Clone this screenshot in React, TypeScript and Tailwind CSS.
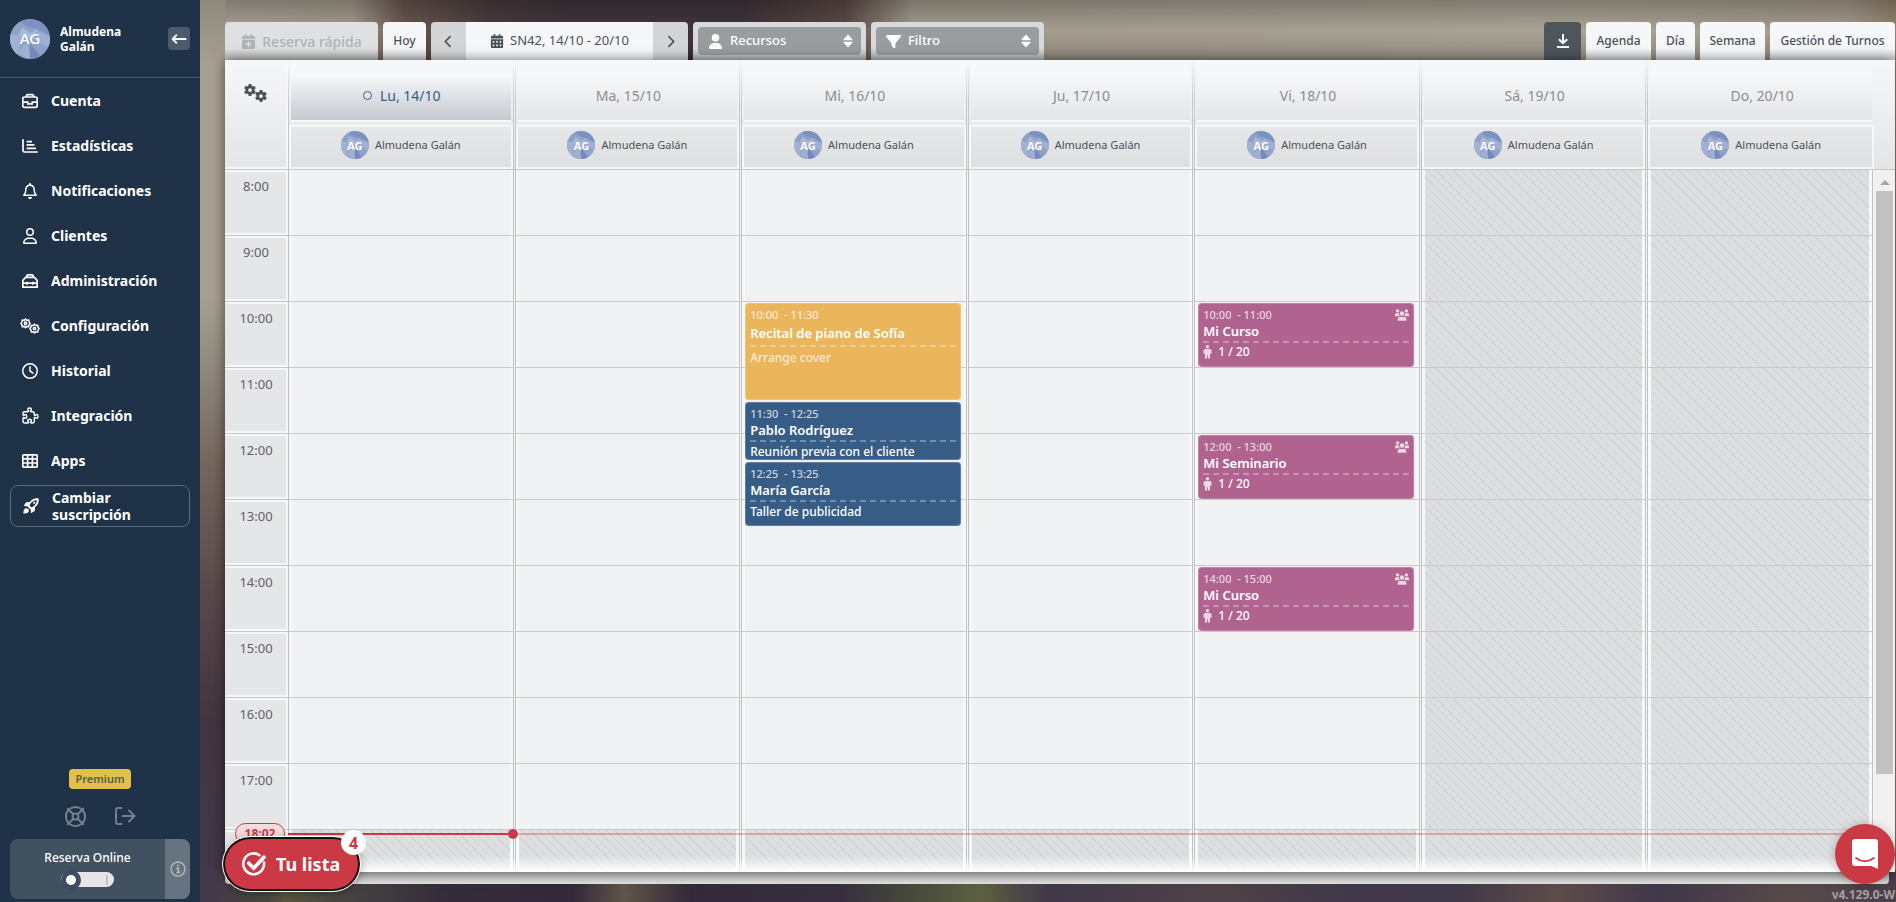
import React from "react";
import {
  FaRegBell, FaRegUser, FaRegClock, FaGear, FaPuzzlePiece, FaRegLifeRing, FaCalendarPlus,
  FaCalendarDays, FaUser, FaFilter, FaChevronLeft, FaChevronRight,
} from "react-icons/fa6";

type Line = React.SVGProps<SVGSVGElement>;
const Svg = (p: Line) => (
  <svg viewBox="0 0 16 16" width="16" height="16" fill="none" stroke="currentColor" strokeWidth="1.5" aria-hidden="true" {...p} />
);

const Briefcase = () => (
  <Svg strokeWidth="1.7">
    <rect x="0.8" y="4" width="14.4" height="10.4" rx="1.6" />
    <path d="M4.5 4V2.6Q4.5 1.6 5.5 1.6h5q1 0 1 1V4M1 9.2h4.8v1.6h4.4V9.2H15" />
  </Svg>
);
const ChartBars = () => (
  <Svg strokeWidth="1.7">
    <path d="M1 1.2V12.4Q1 14 2.6 14H15.8M4.6 3.6H10M4.6 6.9H12.4M4.6 10.3H14" />
  </Svg>
);
const Toolbox = () => (
  <Svg strokeWidth="1.7">
    <path d="M.8 14.2V7.4L3.6 4.4h8.8l2.8 3v6.8zM4.9 4.4V2.8q0-1 1-1h4.2q1 0 1 1v1.6M1 10.2h14M5 8.8v3M11 8.8v3" />
  </Svg>
);
const GridCells = () => (
  <Svg strokeWidth="1.7">
    <rect x="0.8" y="1.8" width="14.4" height="12.4" rx="1" />
    <path d="M.8 5.8h14.4M.8 10h14.4M5.6 2v12M10.4 2v12" />
  </Svg>
);
const Rocket = () => (
  <Svg viewBox="0 0 16 16" fill="currentColor" stroke="none">
    <path
      fillRule="evenodd"
      d="M15.6.4C11.600-.2 8.700 1.400 6.800 4L3.600 4.200Q3 4.300 2.700 4.800L.8 8l3.400.2 3.600 3.600.2 3.400 3.200-1.900q.5-.3.600-.9l.2-3.200C14.600 7.300 16.200 4.400 15.600.4zM13.800 2.200C13.800 4.900 12.500 7 10.200 8.600L8.700 9.600 6.400 7.300 7.400 5.800C9 3.500 11.100 2.200 13.800 2.200z"
    />
    <circle cx="11.2" cy="4.8" r="1.1" />
    <path d="M1.700 10.700q2-1.200 3.400.2t.2 3.400Q4.300 15.700.4 15.600.3 11.700 1.700 10.700z" />
  </Svg>
);
const LongArrowLeft = () => (
  <Svg strokeWidth="1.8" strokeLinecap="round" strokeLinejoin="round">
    <path d="M14.600 8H1.800M5.400 4.200 1.600 8l3.800 3.800" />
  </Svg>
);
const Puzzle = () => <FaPuzzlePiece size={15} className="overflow-visible" fill="none" stroke="currentColor" strokeWidth="48" />;
const UpDown = () => (
  <svg viewBox="0 0 10 14" width="10" height="14" fill="currentColor" className="ml-auto" aria-hidden="true">
    <path d="M5 .6 9.400 5.300q.4.900-.5.900H1.100Q.2 6.200.6 5.300zM5 13.400.6 8.700Q.2 7.800 1.100 7.800h7.800q.9 0 .5.900z" />
  </svg>
);
const Crowd = () => (
  <svg viewBox="0 0 14 12" width="14" height="12" fill="currentColor" aria-hidden="true">
    <circle cx="2.600" cy="1.900" r="1.700" />
    <circle cx="11.400" cy="1.900" r="1.700" />
    <circle cx="7" cy="4.600" r="2.300" />
    <path d="M0 7.200V5.600Q0 4.200 1.500 4.200H3.800Q3.800 6 5 7.200zM14 7.200V5.600Q14 4.200 12.500 4.200H10.200Q10.200 6 9 7.200zM2.600 11.800V10.200Q2.600 8 5 8H9q2.400 0 2.400 2.200v1.600z" />
  </svg>
);
const Person = () => (
  <svg viewBox="0 0 9 14" width="9" height="14" fill="currentColor" className="text-white/75" aria-hidden="true">
    <circle cx="4.500" cy="1.800" r="1.700" />
    <path d="M2.200 3.900H6.800Q8.500 3.900 8.500 5.600V8.800H7V13.600H4.900V10.200H4.100V13.600H2V8.800H.5V5.600Q.5 3.900 2.200 3.900z" />
  </svg>
);

const Gears = ({ outline }: { outline?: boolean }) =>
  outline ? (
    <svg viewBox="0 0 20 16" width="20" height="16" fill="none" stroke="currentColor" strokeWidth="1.5" aria-hidden="true">
      <path d="M5.5 1l1.2 1.2 2-.2.4 1.8L10 5.3l-.9 1.5-.4 1.8-2-.2L5.5 9.6 4.3 8.4l-2 .2-.4-1.8L1 5.3l.9-1.5.4-1.8 2 .2z" />
      <circle cx="5.5" cy="5.3" r="1.2" />
      <path d="M14.5 6.3l1.2 1.2 2-.2.4 1.8.9 1.5-.9 1.5-.4 1.8-2-.2-1.2 1.2-1.2-1.2-2 .2-.4-1.8-.9-1.5.9-1.5.4-1.8 2 .2z" />
      <circle cx="14.5" cy="10.6" r="1.2" />
    </svg>
  ) : (
    <span className="flex">
      <FaGear size={12} />
      <FaGear size={12} className="mt-1.5 -ml-px" />
    </span>
  );

const Avatar = ({ big }: { big?: boolean }) => (
  <span
    className={
      "grid shrink-0 place-items-center overflow-hidden rounded-full [grid-template-areas:'a'] " +
      (big ? "size-10 text-[15px]" : "size-7 text-[11px]")
    }
  >
    <svg viewBox="0 0 40 40" className="size-full [grid-area:a]" aria-hidden="true">
      <rect width="40" height="40" fill="#8ea1c9" />
      <path d="M10 0H40V16L27 10 14 6z" fill="#7b92c0" />
      <path d="M12 8l8 6 8-4-4 10L8 18z" fill="#a9b8d6" />
      <path d="M0 14l12 4-4 18-8-6z" fill="#a2b1d2" />
      <path d="M28 12l12 6v10L26 22z" fill="#a0afd3" />
      <path d="M20 24l12 16H20z" fill="#7389bb" />
      <path d="M8 34l10-12 2 18z" fill="#9fb0d3" />
    </svg>
    <span className={"z-10 [grid-area:a] leading-none text-white " + (big ? "font-medium" : "font-bold")}>AG</span>
  </span>
);

const MENU: [string, React.ReactNode][] = [
  ["Cuenta", <Briefcase />],
  ["Estadísticas", <ChartBars />],
  ["Notificaciones", <FaRegBell size={16} />],
  ["Clientes", <FaRegUser size={16} />],
  ["Administración", <Toolbox />],
  ["Configuración", <Gears outline />],
  ["Historial", <FaRegClock size={16} />],
  ["Integración", <Puzzle />],
  ["Apps", <GridCells />],
];

function Sidebar() {
  return (
    <aside className="flex w-[200px] shrink-0 flex-col bg-[#1f3247] text-white">
      <div className="flex h-[78px] items-center border-b border-[#4c5c6c] px-2.5">
        <Avatar big />
        <p className="ml-2.5 flex-1 text-[12px] leading-[15px] font-bold">
          Almudena
          <br />
          Galán
        </p>
        <button aria-label="Contraer menú" className="grid h-[23px] w-[22px] place-items-center rounded bg-[#4c5b6c]">
          <LongArrowLeft />
        </button>
      </div>
      <nav className="flex flex-col">
        {MENU.map(([label, icon]) => (
          <a key={label} href="#" className="flex h-[45px] items-center pl-5 text-[14px] font-bold">
            <span className="grid w-5 place-items-center">{icon}</span>
            <span className="ml-[11px]">{label}</span>
          </a>
        ))}
        <a href="#" className="mx-2.5 mt-0.5 flex h-[42px] items-center rounded-lg border border-[#5c6a79] pl-2.5 text-[14px] leading-[17px] font-bold">
          <span className="grid w-5 place-items-center">
            <Rocket />
          </span>
          <span className="ml-[11px]">
            Cambiar
            <br />
            suscripción
          </span>
        </a>
      </nav>
      <div className="mt-auto flex flex-col items-center pb-[3px]">
        <span className="rounded bg-[#e0c14d] px-1.5 text-[11px] leading-5 font-semibold text-[#5e5c42]">Premium</span>
        <div className="mt-[17px] flex h-5 items-center gap-7 text-[#74818e]">
          <a href="#" aria-label="Ayuda">
            <FaRegLifeRing size={21} />
          </a>
          <a href="#" aria-label="Salir">
            <Svg viewBox="0 0 22 20" width="22" height="20" strokeWidth="2" strokeLinecap="round">
              <path d="M7.5 2H4Q2 2 2 4v12q0 2 2 2h3.5M8.5 10H20.5M15 4.5l5.5 5.5-5.5 5.5" />
            </Svg>
          </a>
        </div>
        <div className="mt-[13px] flex h-[60px] w-[180px] overflow-hidden rounded-lg bg-[#42515f]">
          <label className="flex flex-1 flex-col items-center pt-[11px] text-[12px] leading-4 font-medium">
            Reserva Online
            <input type="checkbox" className="peer sr-only" />
            <span className="mt-1.5 flex h-[15px] w-[53px] items-center justify-between rounded-full bg-[#e6e6e8] pr-1.5">
              <span className="grid size-5 place-items-center rounded-full bg-[#3b4d61]">
                <span className="size-2.5 rounded-full bg-white" />
              </span>
              <span className="h-2.5 w-0.5 bg-[#c2c2c4]" />
            </span>
          </label>
          <button aria-label="Información" className="grid w-[25px] place-items-center bg-[#67737f] text-[#b3b9bf]">
            <Svg strokeWidth="1.4">
              <circle cx="8" cy="8" r="7" />
              <path d="M6.3 7.2H8.3V11.5M6.2 11.5h4M7.2 4.5h1.6" strokeWidth="1.6" />
            </Svg>
          </button>
        </div>
      </div>
    </aside>
  );
}

const tab = "h-[38px] rounded-t bg-[#f6f7f9] text-[12px] font-medium text-[#4a5257]";
const shade = "bg-linear-to-b from-[#f6f7f9] from-70% to-[#cfd0d2]";

function Toolbar() {
  return (
    <div className="flex h-[38px] gap-[5px]">
      <button disabled className="flex w-[153px] items-center justify-center gap-1.5 rounded-t bg-linear-to-b from-[#dfe0e1] from-70% to-[#b9b9b9] text-[14px] font-medium text-[#b0b2b4]">
        <FaCalendarPlus size={15} />
        Reserva rápida
      </button>
      <button className={tab + " w-[43px] " + shade}>Hoy</button>
      <div className="flex">
        <button aria-label="Semana anterior" className="grid w-[35px] place-items-center rounded-tl bg-[#d3d5d7] text-[#4a5257]">
          <FaChevronLeft size={13} />
        </button>
        <button className="flex w-[187px] items-center justify-center gap-1.5 bg-[#f6f7f9] text-[13px] text-[#4a5257]">
          <FaCalendarDays size={14} />
          SN42, 14/10 - 20/10
        </button>
        <button aria-label="Semana siguiente" className="grid w-[35px] place-items-center rounded-tr bg-[#d3d5d7] text-[#4a5257]">
          <FaChevronRight size={13} />
        </button>
      </div>
      {[
        { label: "Recursos", icon: <FaUser size={15} /> },
        { label: "Filtro", icon: <FaFilter size={15} /> },
      ].map((f) => (
        <div key={f.label} className="w-[173px] rounded-t bg-linear-to-b from-[#d8d9da] from-70% to-[#b5b5b6] p-[5px]">
          <button className="flex h-7 w-full items-center gap-[7px] rounded-sm bg-[#999d9f] pr-2 pl-2.5 text-[13px] font-medium text-white">
            {f.icon}
            {f.label}
            <UpDown />
          </button>
        </div>
      ))}
      <div className="ml-auto flex gap-[5px]">
        <button aria-label="Descargar" className="grid w-[37px] place-items-center rounded-t bg-[#4d575b] text-white">
          <Svg viewBox="0 0 14 14" width="14" height="14" strokeWidth="2">
            <path d="M7 0V8.6M2.8 5.2 7 9.2l4.2-4M1 13h12" />
          </Svg>
        </button>
        <button className={tab + " w-[65px] " + shade}>Agenda</button>
        <button className={tab + " w-[39px] " + shade}>Día</button>
        <button className={tab + " w-[65px]"}>Semana</button>
        <button className={tab + " w-[125px] " + shade}>Gestión de Turnos</button>
      </div>
    </div>
  );
}

const DAYS = ["Lu, 14/10", "Ma, 15/10", "Mi, 16/10", "Ju, 17/10", "Vi, 18/10", "Sá, 19/10", "Do, 20/10"];
const HOURS = [8, 9, 10, 11, 12, 13, 14, 15, 16, 17, 18];
const HOUR_PX = 66;

type Ev = { day: number; start: string; end: string; title: string; note?: string; seats?: string; tone: string };
const EVENTS: Ev[] = [
  { day: 2, start: "10:00", end: "11:30", title: "Recital de piano de Sofía", note: "Arrange cover", tone: "bg-[#ebb55c]" },
  { day: 2, start: "11:30", end: "12:25", title: "Pablo Rodríguez", note: "Reunión previa con el cliente", tone: "bg-[#375d86]" },
  { day: 2, start: "12:25", end: "13:25", title: "María García", note: "Taller de publicidad", tone: "bg-[#375d86]" },
  { day: 4, start: "10:00", end: "11:00", title: "Mi Curso", seats: "1 / 20", tone: "bg-[#b0638f]" },
  { day: 4, start: "12:00", end: "13:00", title: "Mi Seminario", seats: "1 / 20", tone: "bg-[#b0638f]" },
  { day: 4, start: "14:00", end: "15:00", title: "Mi Curso", seats: "1 / 20", tone: "bg-[#b0638f]" },
];
const toPx = (t: string) => {
  const [h, m] = t.split(":").map(Number);
  return Math.floor((h - 8 + m / 60) * HOUR_PX);
};

function EventCard({ ev }: { ev: Ev }) {
  const top = toPx(ev.start) + 1;
  const long = ev.end === "11:30";
  return (
    <div
      className={"absolute right-[5px] left-[3px] overflow-hidden rounded px-[5px] pt-1.5 text-white shadow-[inset_0_0_0_1px_rgba(255,255,255,0.2)] " + ev.tone}
      style={{ top, height: toPx(ev.end) - 1 - top }}
    >
      <div className="flex h-3 items-center justify-between text-[11px] leading-3 font-medium text-white/75">
        <span className="whitespace-pre">{ev.start + "  - " + ev.end}</span>
        {ev.seats && <Crowd />}
      </div>
      <p className={"truncate border-b-2 border-dashed border-white/30 text-[13px] font-semibold " + (long ? "leading-6" : "leading-5")}>{ev.title}</p>
      {ev.note && <p className={"truncate text-[12px] font-medium " + (long ? "pt-0.5 leading-[18px] text-white/75" : "leading-[19px]")}>{ev.note}</p>}
      {ev.seats && (
        <p className="flex items-center gap-1.5 text-[12px] leading-[18px] font-medium">
          <Person />
          {ev.seats}
        </p>
      )}
    </div>
  );
}

const hatch = "bg-[repeating-linear-gradient(45deg,#dddee0_0px,#dddee0_5px,#d2d3d5_5px,#d2d3d5_6px)]";

function Calendar() {
  return (
    <section className="relative flex min-h-0 flex-1 flex-col overflow-hidden bg-[#f6f7f9] shadow-[0_0_12px_rgba(0,0,0,0.55)]">
      <header className="flex h-[110px] shrink-0 border-b border-[#c4c5c7] bg-linear-to-b from-[#f6f7f9] to-[#e4e5e7]">
        <div className="w-[63px] border-r-2 border-b-2 border-[#f6f7f9] text-[#4a5257]">
          <button aria-label="Ajustes" className="mt-6 ml-[19px]">
            <Gears />
          </button>
        </div>
        <div className="grid flex-1 grid-cols-7">
          {DAYS.map((d, i) => (
            <div key={d} className="mr-px flex flex-col border-x border-[#c4c5c7] [border-image:linear-gradient(#f6f7f9,#c4c5c7_40%)_1] last:mr-0 last:border-r-0">
              <div className="mx-0.5 flex h-[62px] flex-col border-b-2 border-[#f6f7f9]">
                <h2
                  className={
                    "flex flex-1 items-center justify-center gap-2 pt-2.5 pl-0.5 text-[14px] " +
                    (i === 0
                      ? "bg-linear-to-b from-[#f6f7f9] from-25% to-[#c5cad0] text-[#375d86]"
                      : "bg-linear-to-b from-[#f6f7f9] from-25% to-[#e4e5e7] text-[#8a8d90]")
                  }
                >
                  {i === 0 && <span className="size-[9px] rounded-full border border-[#375d86]" />}
                  {d}
                </h2>
              </div>
              <div className="mt-[3px] flex flex-1 items-center justify-center gap-1.5 border-2 border-[#f6f7f9] bg-linear-to-b from-[#e6e7e9] to-[#dedfe1] pb-1 text-[11px] text-[#4a5257]">
                <Avatar />
                Almudena Galán
              </div>
            </div>
          ))}
        </div>
        <div className="w-[21px]" />
      </header>
      <div className="flex min-h-0 flex-1 overflow-hidden">
        <div className="w-[63px] shrink-0">
          {HOURS.map((h) => (
            <div key={h} className="h-[66px] border-b border-[#c4c5c7] py-0.5 pr-0.5">
              <div className="h-full bg-[#e5e6e8] pt-[5px] pr-2 pl-[9px] text-center text-[13px] leading-[18px] text-[#5c6167]">{h < 18 && h + ":00"}</div>
            </div>
          ))}
        </div>
        <div className="relative grid flex-1 grid-cols-7">
          {DAYS.map((d, i) => (
            <div key={d} className="relative mr-px border-x border-[#bfc0c2] last:mr-0 last:border-r-0">
              {HOURS.map((h) => (
                <div key={h} className="h-[66px] border-b border-[#c8c9cb]">
                  <div className={"h-full border-x-[3px] border-[#f6f7f9] " + (i > 4 || h > 17 ? hatch : "bg-[#f0f1f3]")} />
                </div>
              ))}
              {EVENTS.filter((e) => e.day === i).map((e) => (
                <EventCard key={e.start} ev={e} />
              ))}
            </div>
          ))}
          <div className="absolute inset-x-0 top-[663px] h-0.5 bg-[#cb3a44]/35">
            <div className="h-full w-1/7 bg-[#cb3a44]" />
            <span className="absolute -top-1 left-1/7 -ml-[7px] size-2.5 rounded-full bg-[#cb3a44]" />
            <span className="absolute -top-[10px] -left-[53px] w-[50px] rounded-full border border-[#cb3a44] bg-[#f3dcde] text-center text-[12px] leading-[19px] font-bold text-[#cb3a44]">18:02</span>
          </div>
        </div>
        <div className="w-[21px] bg-[#f0f0f0] px-0.5">
          <div className="mx-auto mt-2.5 size-0 border-x-[5px] border-b-[5px] border-x-transparent border-b-[#a3a3a3]" />
          <div className="mt-1.5 h-[583px] bg-[#c1c1c1]" />
        </div>
      </div>
      <div className="absolute inset-x-0 bottom-0 h-4 bg-linear-to-b from-white/0 to-white" />
    </section>
  );
}

export default function App() {
  return (
    <div className="relative flex h-screen overflow-hidden bg-[#3d3342] font-['Noto_Sans',sans-serif]">
      <Sidebar />
      <main className="relative flex min-w-0 flex-1 flex-col bg-[linear-gradient(90deg,#aaa396_0%,#a39b8d_9%,#6b5750_12%,#4a3d40_17%,#40353b_22%,#40353b_32%,#5c4a47_38%,#a39c8e_42%,#aaa395_80%,#a59b8d_97%,#94836c_100%)]">
        <div className="absolute inset-x-0 top-0 h-[60px] bg-linear-to-b from-black/25 via-black/0 via-50% to-black/15" />
        <div className="absolute inset-y-0 left-0 w-[25px] bg-[linear-gradient(180deg,#8f887c_0%,#a69f92_7%,#a69f92_33%,#8d857a_42%,#75645c_52%,#5a4a4b_65%,#43353f_80%,#41394b_100%)]" />
        <div className="absolute inset-x-0 bottom-0 h-8 bg-[linear-gradient(90deg,#41384a_0%,#4a4740_4%,#5a563f_5%,#484644_8%,#332a3a_15%,#33293a_22%,#5f5548_25%,#33293a_29%,#383040_38%,#474a3c_42%,#5c6040_46%,#40384a_50%,#4f4247_60%,#40384a_68%,#3f3849_74%,#5e4c49_80%,#40384a_86%,#584a49_94%,#4a3f4a_100%)]" />
        <div className="relative flex min-h-0 flex-1 flex-col pt-[22px] pr-px pl-[25px]">
          <Toolbar />
          <Calendar />
          <div className="mr-1.5 h-3 rounded-b bg-linear-to-b from-[#b5b5b6] to-[#e2e2e2]" />
          <p className="h-[18px] text-right text-[12px] leading-[22px] font-bold whitespace-nowrap text-[#a59fa6]">v4.129.0-W</p>
        </div>
      </main>
      <button className="absolute bottom-2.5 left-[222px] flex h-14 w-[139px] items-center gap-2.5 rounded-full border border-white bg-[#cb3a44] pl-[19px] text-[18px] font-bold text-white shadow-[inset_0_0_0_2px_#111,0_2px_8px_rgba(0,0,0,0.3)]">
        <Svg viewBox="0 0 24 24" width="24" height="24" strokeWidth="2.5" strokeLinecap="round">
          <path d="M17.5 3.2A10.4 10.4 0 1 0 22 10.5" />
          <path d="M6.8 11.2l4.8 5L22 5.2" strokeWidth="3.6" />
        </Svg>
        Tu lista
        <span className="absolute -top-[7px] -right-1.5 grid size-[25px] place-items-center rounded-full bg-white text-[16px] leading-none text-[#cb3a44]">4</span>
      </button>
      <button aria-label="Abrir chat" className="absolute right-px bottom-[18px] grid size-[60px] place-items-center rounded-full bg-[#cb3a44] shadow-[0_1px_10px_rgba(0,0,0,0.25)]">
        <svg viewBox="0 0 28 32" width="28" height="32" aria-hidden="true">
          <path d="M4 1H24Q27 1 27 4V31L20.5 28H4Q1 28 1 25V4Q1 1 4 1z" fill="#fff" />
          <path d="M5 20Q14 26.500 23 20" fill="none" stroke="#cb3a44" strokeWidth="1.8" strokeLinecap="round" />
        </svg>
      </button>
    </div>
  );
}
